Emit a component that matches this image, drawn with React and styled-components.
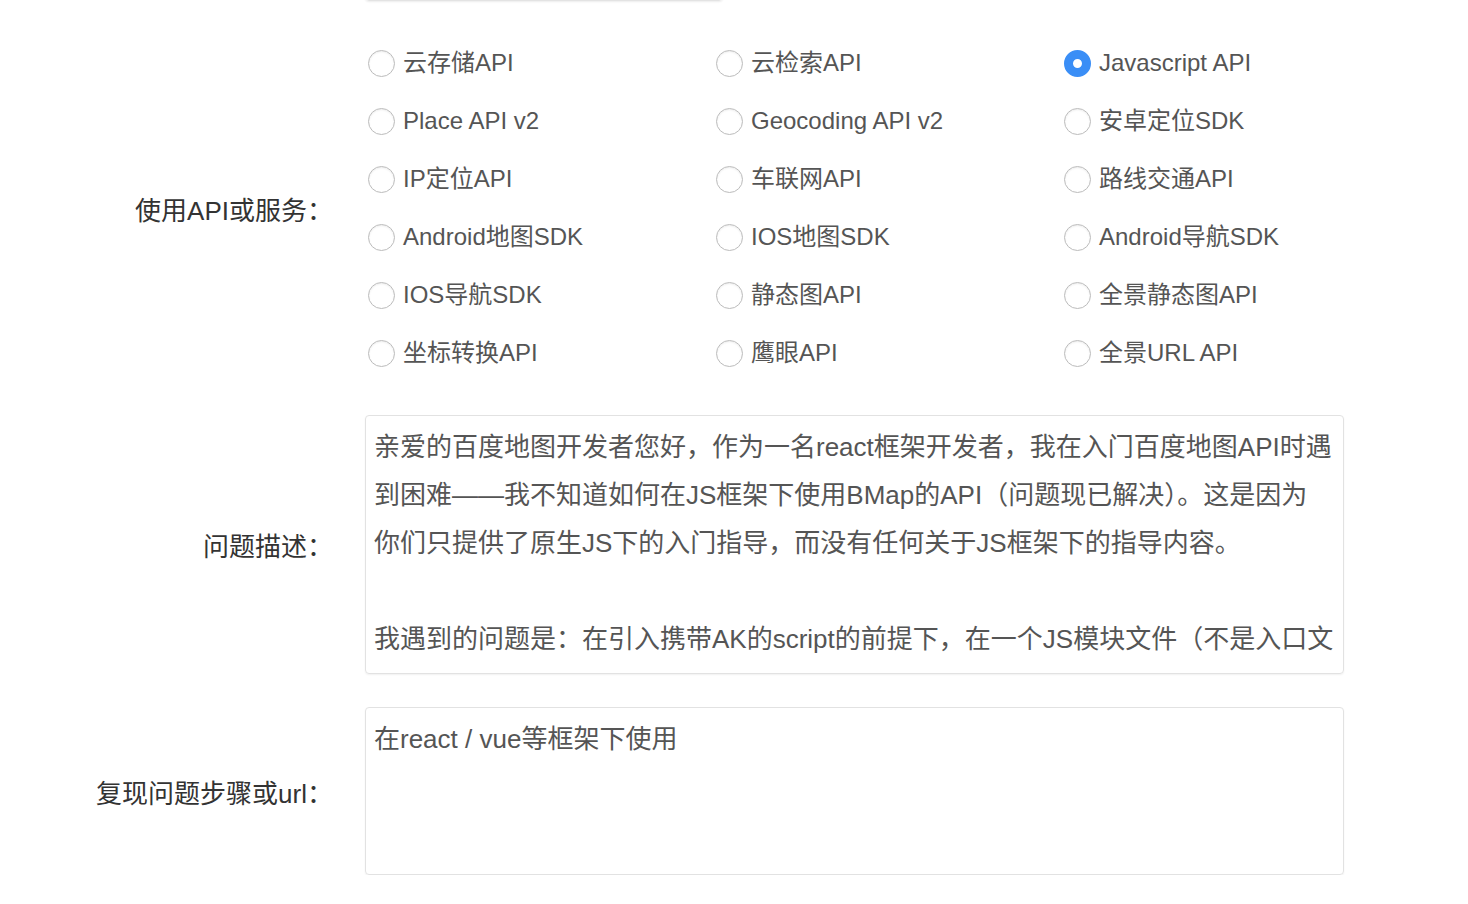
import React from "react";
import styled, { createGlobalStyle } from "styled-components";

const services = [
  "云存储API", "云检索API", "Javascript API",
  "Place API v2", "Geocoding API v2", "安卓定位SDK",
  "IP定位API", "车联网API", "路线交通API",
  "Android地图SDK", "IOS地图SDK", "Android导航SDK",
  "IOS导航SDK", "静态图API", "全景静态图API",
  "坐标转换API", "鹰眼API", "全景URL API",
];

const description =
  "亲爱的百度地图开发者您好，作为一名react框架开发者，我在入门百度地图API时遇\n" +
  "到困难——我不知道如何在JS框架下使用BMap的API（问题现已解决）。这是因为\n" +
  "你们只提供了原生JS下的入门指导，而没有任何关于JS框架下的指导内容。\n" +
  "\n" +
  "我遇到的问题是：在引入携带AK的script的前提下，在一个JS模块文件（不是入口文";

const App = () => {
  const selected = "Javascript API";

  return (
    <>
      <GlobalStyle />
      <Form>
        <Row>
          <Label />
          <TopInput />
        </Row>
        <Row>
          <Label>使用API或服务：</Label>
          <RadioGrid>
            {services.map((name) => (
              <RadioItem key={name}>
                <Radio checked={name === selected} />
                <RadioText>{name}</RadioText>
              </RadioItem>
            ))}
          </RadioGrid>
        </Row>
        <Row>
          <Label>问题描述：</Label>
          <TextBox height={259}>{description}</TextBox>
        </Row>
        <Row>
          <Label>复现问题步骤或url：</Label>
          <TextBox height={168}>在react / vue等框架下使用</TextBox>
        </Row>
      </Form>
    </>
  );
};

const GlobalStyle = createGlobalStyle`
  html, body {
    margin: 0;
    background: #fff;
  }
  body {
    font-family: "Liberation Sans", "Noto Sans CJK SC", sans-serif;
  }
`;

const Form = styled.div`
  display: flex;
  flex-direction: column;
  gap: 33px;
  margin-top: -39px;
`;

const Row = styled.div`
  display: flex;
  align-items: center;
`;

const Label = styled.div`
  width: 333px;
  flex-shrink: 0;
  margin-right: 32px;
  text-align: right;
  font-size: 26px;
  color: #333;
`;

const TopInput = styled.div`
  width: 358px;
  height: 40px;
  box-sizing: border-box;
  border: 1px solid #e3e3e3;
  border-radius: 4px;
  box-shadow: 0 1px 2px rgba(0, 0, 0, 0.08);
`;

const RadioGrid = styled.div`
  display: grid;
  grid-template-columns: repeat(3, 348px);
  grid-auto-rows: 58px;
  padding-left: 3px;
`;

const RadioItem = styled.label`
  display: flex;
  align-items: center;
  gap: 8px;
`;

const Radio = styled.span`
  width: 27px;
  height: 27px;
  box-sizing: border-box;
  border-radius: 50%;
  flex-shrink: 0;
  border: ${(p) => (p.checked ? "9px solid #3a8ef6" : "1.5px solid #bcbcbc")};
  background: #fff;
  box-shadow: ${(p) => (p.checked ? "none" : "inset 0 1px 2px rgba(0,0,0,0.08)")};
`;

const RadioText = styled.span`
  font-size: 24px;
  line-height: 28px;
  color: #555;
`;

const TextBox = styled.div`
  width: 979px;
  height: ${(p) => p.height}px;
  box-sizing: border-box;
  padding: 7px 8px;
  border: 1px solid #e2e2e2;
  border-radius: 4px;
  box-shadow: 0 1px 2px rgba(0, 0, 0, 0.06);
  font-size: 26px;
  line-height: 48px;
  color: #555;
  white-space: pre-wrap;
  overflow: hidden;
`;

export default App;
